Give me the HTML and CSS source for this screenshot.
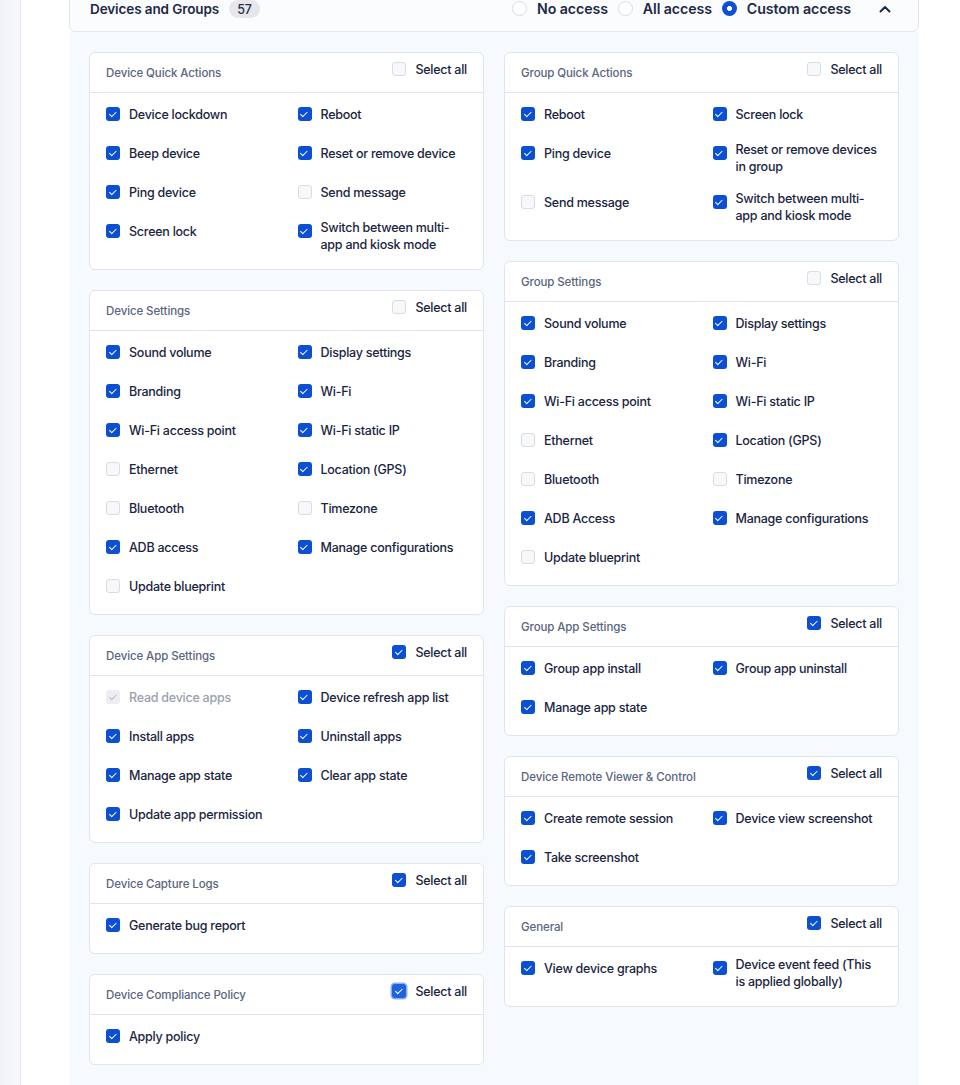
FILE: index.html
```html
<!DOCTYPE html>
<html lang="en">
<head>
<meta charset="utf-8">
<title>Devices and Groups</title>
<link rel="stylesheet" href="styles.css">
</head>
<body>
<div class="app">
  <aside class="rail"></aside>
  <main class="main">
    <section class="access-panel">
      <header class="panel-head">
        <div class="head-left">
          <h2 class="panel-title">Devices and Groups</h2>
          <span class="count">57</span>
        </div>
        <div class="head-right">
          <label class="radio"><span class="radio-dot"></span>No access</label>
          <label class="radio"><span class="radio-dot"></span>All access</label>
          <label class="radio"><span class="radio-dot on"></span>Custom access</label>
          <button class="collapse" type="button" aria-label="Collapse">
            <svg width="12" height="8" viewBox="0 0 12 8"><path d="M1.5 6.5 L6 2 L10.5 6.5" fill="none" stroke="#1c2947" stroke-width="2" stroke-linecap="round" stroke-linejoin="round"/></svg>
          </button>
        </div>
      </header>

      <div class="panel-body">
        <div class="col">
          <div class="card">
            <div class="card-head"><span class="card-title">Device Quick Actions</span><label class="select-all"><span class="cb"></span>Select all</label></div>
            <div class="card-body">
              <label class="opt"><span class="cb on"></span><span class="opt-text">Device lockdown</span></label>
              <label class="opt"><span class="cb on"></span><span class="opt-text">Reboot</span></label>
              <label class="opt"><span class="cb on"></span><span class="opt-text">Beep device</span></label>
              <label class="opt"><span class="cb on"></span><span class="opt-text">Reset or remove device</span></label>
              <label class="opt"><span class="cb on"></span><span class="opt-text">Ping device</span></label>
              <label class="opt"><span class="cb"></span><span class="opt-text">Send message</span></label>
              <label class="opt"><span class="cb on"></span><span class="opt-text">Screen lock</span></label>
              <label class="opt"><span class="cb on"></span><span class="opt-text">Switch between multi-app and kiosk mode</span></label>
            </div>
          </div>

          <div class="card">
            <div class="card-head"><span class="card-title">Device Settings</span><label class="select-all"><span class="cb"></span>Select all</label></div>
            <div class="card-body">
              <label class="opt"><span class="cb on"></span><span class="opt-text">Sound volume</span></label>
              <label class="opt"><span class="cb on"></span><span class="opt-text">Display settings</span></label>
              <label class="opt"><span class="cb on"></span><span class="opt-text">Branding</span></label>
              <label class="opt"><span class="cb on"></span><span class="opt-text">Wi-Fi</span></label>
              <label class="opt"><span class="cb on"></span><span class="opt-text">Wi-Fi access point</span></label>
              <label class="opt"><span class="cb on"></span><span class="opt-text">Wi-Fi static IP</span></label>
              <label class="opt"><span class="cb"></span><span class="opt-text">Ethernet</span></label>
              <label class="opt"><span class="cb on"></span><span class="opt-text">Location (GPS)</span></label>
              <label class="opt"><span class="cb"></span><span class="opt-text">Bluetooth</span></label>
              <label class="opt"><span class="cb"></span><span class="opt-text">Timezone</span></label>
              <label class="opt"><span class="cb on"></span><span class="opt-text">ADB access</span></label>
              <label class="opt"><span class="cb on"></span><span class="opt-text">Manage configurations</span></label>
              <label class="opt"><span class="cb"></span><span class="opt-text">Update blueprint</span></label>
            </div>
          </div>

          <div class="card">
            <div class="card-head"><span class="card-title">Device App Settings</span><label class="select-all"><span class="cb on"></span>Select all</label></div>
            <div class="card-body">
              <label class="opt disabled"><span class="cb on"></span><span class="opt-text">Read device apps</span></label>
              <label class="opt"><span class="cb on"></span><span class="opt-text">Device refresh app list</span></label>
              <label class="opt"><span class="cb on"></span><span class="opt-text">Install apps</span></label>
              <label class="opt"><span class="cb on"></span><span class="opt-text">Uninstall apps</span></label>
              <label class="opt"><span class="cb on"></span><span class="opt-text">Manage app state</span></label>
              <label class="opt"><span class="cb on"></span><span class="opt-text">Clear app state</span></label>
              <label class="opt"><span class="cb on"></span><span class="opt-text">Update app permission</span></label>
            </div>
          </div>

          <div class="card">
            <div class="card-head"><span class="card-title">Device Capture Logs</span><label class="select-all"><span class="cb on"></span>Select all</label></div>
            <div class="card-body">
              <label class="opt"><span class="cb on"></span><span class="opt-text">Generate bug report</span></label>
            </div>
          </div>

          <div class="card">
            <div class="card-head"><span class="card-title">Device Compliance Policy</span><label class="select-all"><span class="cb on focus"></span>Select all</label></div>
            <div class="card-body">
              <label class="opt"><span class="cb on"></span><span class="opt-text">Apply policy</span></label>
            </div>
          </div>
        </div>

        <div class="col">
          <div class="card">
            <div class="card-head"><span class="card-title">Group Quick Actions</span><label class="select-all"><span class="cb"></span>Select all</label></div>
            <div class="card-body">
              <label class="opt"><span class="cb on"></span><span class="opt-text">Reboot</span></label>
              <label class="opt"><span class="cb on"></span><span class="opt-text">Screen lock</span></label>
              <label class="opt"><span class="cb on"></span><span class="opt-text">Ping device</span></label>
              <label class="opt"><span class="cb on"></span><span class="opt-text">Reset or remove devices in group</span></label>
              <label class="opt"><span class="cb"></span><span class="opt-text">Send message</span></label>
              <label class="opt"><span class="cb on"></span><span class="opt-text">Switch between multi-app and kiosk mode</span></label>
            </div>
          </div>

          <div class="card">
            <div class="card-head"><span class="card-title">Group Settings</span><label class="select-all"><span class="cb"></span>Select all</label></div>
            <div class="card-body">
              <label class="opt"><span class="cb on"></span><span class="opt-text">Sound volume</span></label>
              <label class="opt"><span class="cb on"></span><span class="opt-text">Display settings</span></label>
              <label class="opt"><span class="cb on"></span><span class="opt-text">Branding</span></label>
              <label class="opt"><span class="cb on"></span><span class="opt-text">Wi-Fi</span></label>
              <label class="opt"><span class="cb on"></span><span class="opt-text">Wi-Fi access point</span></label>
              <label class="opt"><span class="cb on"></span><span class="opt-text">Wi-Fi static IP</span></label>
              <label class="opt"><span class="cb"></span><span class="opt-text">Ethernet</span></label>
              <label class="opt"><span class="cb on"></span><span class="opt-text">Location (GPS)</span></label>
              <label class="opt"><span class="cb"></span><span class="opt-text">Bluetooth</span></label>
              <label class="opt"><span class="cb"></span><span class="opt-text">Timezone</span></label>
              <label class="opt"><span class="cb on"></span><span class="opt-text">ADB Access</span></label>
              <label class="opt"><span class="cb on"></span><span class="opt-text">Manage configurations</span></label>
              <label class="opt"><span class="cb"></span><span class="opt-text">Update blueprint</span></label>
            </div>
          </div>

          <div class="card">
            <div class="card-head"><span class="card-title">Group App Settings</span><label class="select-all"><span class="cb on"></span>Select all</label></div>
            <div class="card-body">
              <label class="opt"><span class="cb on"></span><span class="opt-text">Group app install</span></label>
              <label class="opt"><span class="cb on"></span><span class="opt-text">Group app uninstall</span></label>
              <label class="opt"><span class="cb on"></span><span class="opt-text">Manage app state</span></label>
            </div>
          </div>

          <div class="card">
            <div class="card-head"><span class="card-title">Device Remote Viewer &amp; Control</span><label class="select-all"><span class="cb on"></span>Select all</label></div>
            <div class="card-body">
              <label class="opt"><span class="cb on"></span><span class="opt-text">Create remote session</span></label>
              <label class="opt"><span class="cb on"></span><span class="opt-text">Device view screenshot</span></label>
              <label class="opt"><span class="cb on"></span><span class="opt-text">Take screenshot</span></label>
            </div>
          </div>

          <div class="card">
            <div class="card-head"><span class="card-title">General</span><label class="select-all"><span class="cb on"></span>Select all</label></div>
            <div class="card-body">
              <label class="opt"><span class="cb on"></span><span class="opt-text">View device graphs</span></label>
              <label class="opt"><span class="cb on"></span><span class="opt-text">Device event feed (This is applied globally)</span></label>
            </div>
          </div>
        </div>
      </div>
    </section>
  </main>
</div>
</body>
</html>
```

FILE: styles.css
```css
* { box-sizing: border-box; }

html, body {
  margin: 0;
  padding: 0;
  height: 1085px;
  overflow: hidden;
  background: #ffffff;
  font-family: Inter, "Liberation Sans", sans-serif;
  color: #1a2540;
}

.app {
  display: flex;
  height: 1085px;
}

.rail {
  width: 21px;
  flex: none;
  background: linear-gradient(90deg, #f0f3f9 0%, #f6f8fc 100%);
  border-right: 1px solid #e3e6ec;
}

.main {
  flex: 1;
  padding-left: 48px;
  background: #ffffff;
}

.access-panel {
  width: 850px;
  height: 1085px;
  display: flex;
  flex-direction: column;
}

/* header */
.panel-head {
  margin-top: -16px;
  padding: 12px 20px 10px 20px;
  background: #fbfcfd;
  border: 1px solid #e2e5ea;
  border-radius: 0 0 6px 6px;
  display: flex;
  align-items: center;
  justify-content: space-between;
}

.head-left {
  display: flex;
  align-items: center;
  gap: 10px;
  height: 24px;
}

.panel-title {
  margin: 0;
  font-size: 13.5px;
  font-weight: 600;
  letter-spacing: -0.1px;
  color: #1c2947;
  position: relative;
  top: -0.5px;
}

.count {
  display: inline-flex;
  align-items: center;
  height: 18px;
  padding: 0 8px;
  border-radius: 9px;
  background: #e5e7ec;
  color: #2a3246;
  font-size: 12.5px;
  font-weight: 500;
}

.head-right {
  display: flex;
  align-items: center;
  height: 24px;
}

.radio {
  display: flex;
  align-items: center;
  gap: 10px;
  margin-right: 10px;
  font-size: 14.2px;
  font-weight: 600;
  letter-spacing: -0.1px;
  color: #1c2947;
  position: relative;
  top: -1px;
}

.radio-dot {
  width: 15px;
  height: 15px;
  border-radius: 50%;
  border: 1px solid #d9dce2;
  background: #ffffff;
  flex: none;
}

.radio-dot.on {
  border: none;
  background: radial-gradient(circle, #ffffff 0 2.2px, #0b50d2 2.7px);
}

.collapse {
  width: 26px;
  height: 24px;
  margin-left: 11px;
  padding: 0;
  border: 0;
  background: transparent;
  display: flex;
  align-items: center;
  justify-content: center;
}

/* body */
.panel-body {
  flex: 1;
  background: #f6f9fe;
  padding: 20px;
  display: grid;
  grid-template-columns: 1fr 1fr;
  column-gap: 20px;
  align-items: start;
}

.col {
  display: flex;
  flex-direction: column;
  gap: 20px;
}

.card {
  background: #ffffff;
  border: 1px solid #e1e4ea;
  border-radius: 6px;
}

.card-head {
  height: 40px;
  padding: 0 16px;
  border-bottom: 1px solid #e1e4ea;
  display: flex;
  align-items: center;
  justify-content: space-between;
}

.card-title {
  font-size: 11.5px;
  font-weight: 500;
  color: #5a6580;
  letter-spacing: -0.1px;
}

.select-all {
  display: flex;
  align-items: center;
  gap: 9px;
  margin-bottom: 7px;
  font-size: 12.5px;
  font-weight: 500;
  letter-spacing: -0.25px;
  color: #1a2540;
}

.card-body {
  padding: 9px 16px 16px 16px;
  display: grid;
  grid-template-columns: 1fr 1fr;
  column-gap: 22px;
  row-gap: 15px;
}

.opt {
  display: flex;
  align-items: flex-start;
  gap: 9px;
}

.opt .cb {
  margin-top: 5px;
}

.opt-text {
  min-height: 24px;
  display: flex;
  align-items: center;
  font-size: 12.5px;
  font-weight: 500;
  line-height: 17px;
  letter-spacing: -0.25px;
  color: #1a2540;
}

/* checkbox */
.cb {
  width: 14px;
  height: 14px;
  flex: none;
  border-radius: 3px;
  border: 1px solid #d8dce3;
  background: #f7f8fa;
  position: relative;
}

.cb.on {
  border: none;
  background: #0b50d2;
}

.cb.on::after {
  content: "";
  position: absolute;
  left: 4.7px;
  top: 3px;
  width: 3px;
  height: 5.5px;
  border: solid #ffffff;
  border-width: 0 1.8px 1.8px 0;
  transform: rotate(45deg);
}

.cb.focus {
  background: #1f63dc;
  box-shadow: 0 0 0 1.5px #8ab0f3;
}

.opt.disabled .cb {
  background: #eceef2;
}

.opt.disabled .cb::after {
  border-color: #b3b9c4;
}

.opt.disabled .opt-text {
  color: #9aa1ae;
}
```
